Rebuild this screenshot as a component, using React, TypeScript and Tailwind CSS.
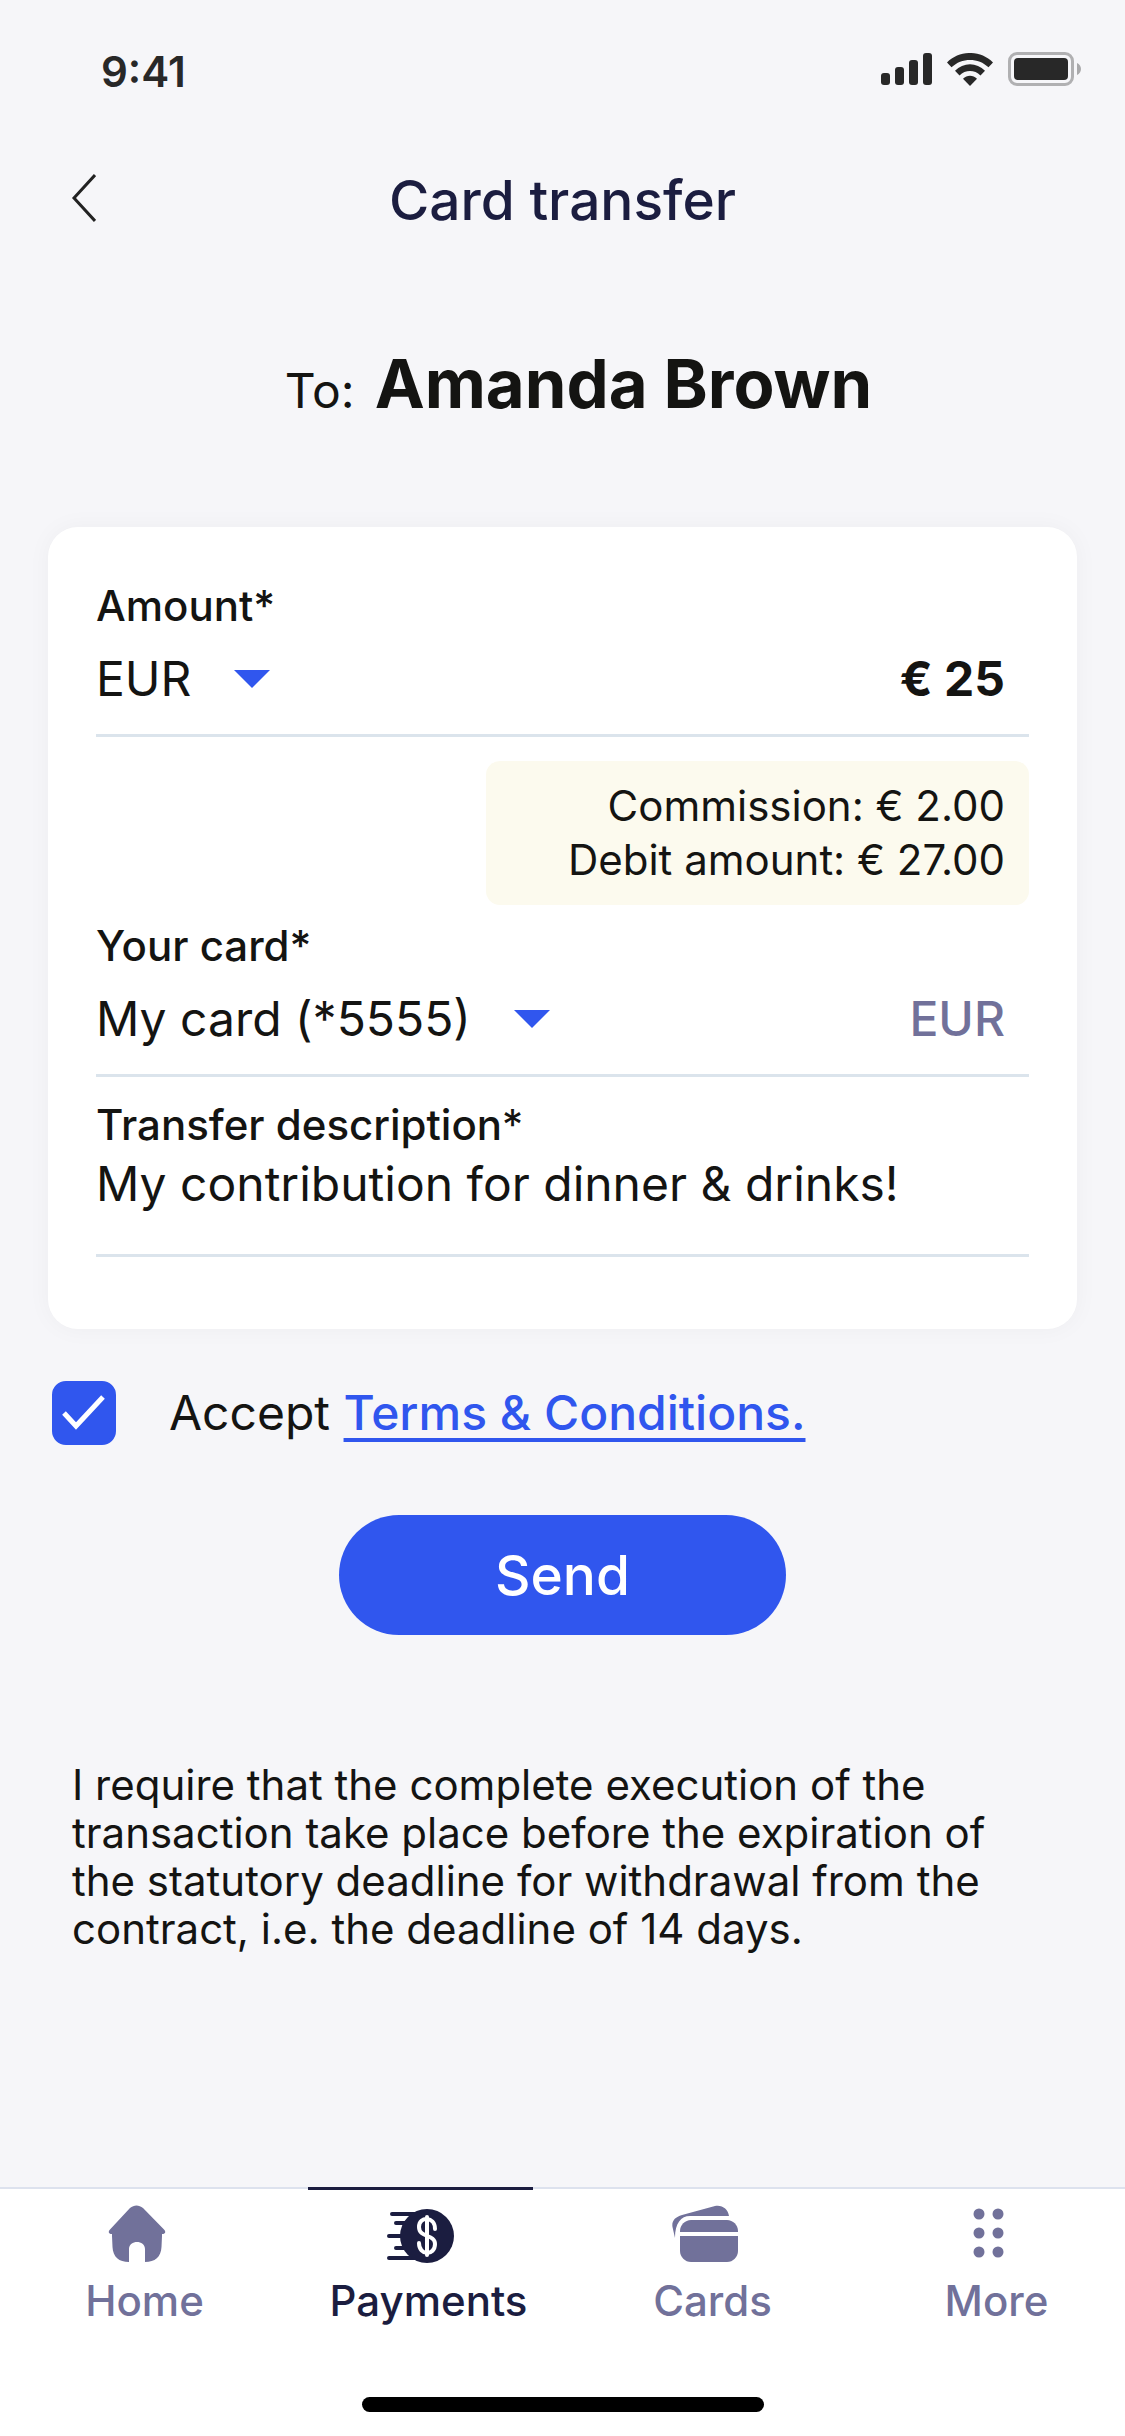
import { useState } from 'react';

function SignalIcon() {
  return (
    <svg width="51" height="33" viewBox="0 0 51 33" fill="#282828">
      <rect x="0" y="20" width="9" height="12" rx="3" />
      <rect x="14" y="14" width="9" height="18" rx="3" />
      <rect x="28" y="7" width="9" height="25" rx="3" />
      <rect x="42" y="0" width="9" height="32" rx="3" />
    </svg>
  );
}

function WifiIcon() {
  return (
    <svg width="46" height="33" viewBox="0 0 46 33" fill="#282828">
      <path d="M0 9.5C12.5-3.2 33.5-3.2 46 9.5L41.5 14.3C31.5 4.5 14.5 4.5 4.5 14.3Z" />
      <path d="M8 17.8C16.2 9 29.8 9 38 17.8L33.5 22.4C27.6 16.5 18.4 16.5 12.5 22.4Z" />
      <path d="M16 25.8C20 21.7 26 21.7 30 25.8L23 33Z" />
    </svg>
  );
}

function BatteryIcon() {
  return (
    <svg width="73" height="34" viewBox="0 0 73 34">
      <rect x="1.5" y="1.5" width="63" height="31" rx="7.5" fill="none" stroke="#b0b0b2" strokeWidth="3" />
      <rect x="6" y="6" width="54" height="22" rx="4" fill="#282828" />
      <path d="M69 11C71.5 12 73 14.5 73 17C73 19.5 71.5 22 69 23Z" fill="#a9a9ab" />
    </svg>
  );
}

function Caret() {
  return (
    <svg width="36" height="18" viewBox="0 0 36 18" className="pointer-events-none">
      <path d="M0 0H36L18 18Z" fill="#3056ee" />
    </svg>
  );
}

function HomeIcon() {
  return (
    <svg width="58" height="58" viewBox="0 0 58 58" fill="currentColor">
      <path d="M22 3C26 -.5 31 -.5 35 3L56 24.500C58.500 27 57 29 54 29V31L53.500 42C53 52 47 57 37 57V44C37 34.500 21 34.500 21 44V57C11 57 5 52 4.500 42L4 31V29C1 29-.5 27 2 24.500Z" />
    </svg>
  );
}

function PaymentsIcon() {
  return (
    <svg width="68" height="58" viewBox="0 0 68 58">
      <g stroke="currentColor" strokeWidth="4" strokeLinecap="round">
        <path d="M5 9H38M9 18H22M2 31H22M9 43H22M2 53H38" />
      </g>
      <circle cx="40" cy="31" r="27" fill="currentColor" />
      <g fill="none" stroke="#fff" strokeWidth="4" strokeLinecap="round">
        <path d="M40 12V50" />
        <path d="M48 24C48 11 32 11 32 22C32 33 48 29 48 39C48 51 32 51 32 38" />
      </g>
    </svg>
  );
}

function CardsIcon() {
  return (
    <svg width="66" height="58" viewBox="0 0 66 58" fill="currentColor">
      <path d="M10 10L43 1C50-.5 56 4 57 11H18C9 11 3 18 3 33L.5 22C-.5 16 3 12 10 10Z" />
      <path d="M8 27V26C8 20 13 15 19 15H55C61 15 66 20 66 26V27Z" />
      <path d="M8 31H66V46C66 52 61 57 55 57H19C13 57 8 52 8 46Z" />
    </svg>
  );
}

function MoreIcon() {
  return (
    <svg width="32" height="58" viewBox="0 0 32 58" fill="currentColor">
      {[9, 28, 47].map((y) => (
        <g key={y}>
          <circle cx="6" cy={y} r="5.500" />
          <circle cx="25" cy={y} r="5.500" />
        </g>
      ))}
    </svg>
  );
}

const tabs = [
  { label: 'Home', Icon: HomeIcon },
  { label: 'Payments', Icon: PaymentsIcon },
  { label: 'Cards', Icon: CardsIcon },
  { label: 'More', Icon: MoreIcon },
];

export default function App() {
  const [currency, setCurrency] = useState('EUR');
  const [card, setCard] = useState('5555');
  const [amount, setAmount] = useState('€ 25');
  const [description, setDescription] = useState('My contribution for dinner & drinks!');
  const [accepted, setAccepted] = useState(true);
  const [activeTab, setActiveTab] = useState('Payments');

  return (
    <div className="flex min-h-screen flex-col bg-[#f6f6f9] font-['Inter','Liberation_Sans',sans-serif] text-[#141412]">
      {/* Status bar */}
      <div className="flex h-[132px] items-start justify-between pt-[46px] pr-[44px] pl-[101px] text-[#282828]">
        <span className="text-[42px] leading-[52px] font-semibold">9:41</span>
        <div className="flex items-center gap-[15px] pt-[6px]">
          <SignalIcon />
          <WifiIcon />
          <BatteryIcon />
        </div>
      </div>

      {/* Header */}
      <header className="grid h-[132px] grid-cols-[1fr_auto_1fr] items-center px-[70px]">
        <button type="button" aria-label="Back" className="justify-self-start">
          <svg width="26" height="50" viewBox="0 0 26 50" fill="none" stroke="#222" strokeWidth="3">
            <path d="M25 2L4 25L25 48" />
          </svg>
        </button>
        <h1 className="pt-1 text-[55px] leading-[64px] font-medium text-[#1b1d40]">Card transfer</h1>
      </header>

      <main className="flex flex-1 flex-col px-12">
        <div className="flex items-baseline justify-center gap-5 pt-[80px] pl-8">
          <span className="text-[48px] leading-[80px]">To:</span>
          <h2 className="text-[67px] leading-[80px] font-bold">Amanda Brown</h2>
        </div>

        {/* Transfer form */}
        <section className="mt-[96px] rounded-[30px] bg-white px-12 pt-[53px] pb-[72px] shadow-[0_0_24px_rgba(0,0,0,0.04)]">
          <label htmlFor="amount" className="block text-[42px] leading-[52px] font-medium">
            Amount*
          </label>
          <div className="flex h-[105px] items-start justify-between border-b-3 border-[#dbe4ec] pt-[15px] pr-6 text-[48px] leading-[64px]">
            <div className="flex items-center gap-[43px]">
              <select
                aria-label="Currency"
                value={currency}
                onChange={(e) => setCurrency(e.target.value)}
                className="field-sizing-content appearance-none bg-transparent"
              >
                <option value="EUR">EUR</option>
                <option value="USD">USD</option>
              </select>
              <Caret />
            </div>
            <input
              id="amount"
              value={amount}
              onChange={(e) => setAmount(e.target.value)}
              className="h-16 w-[300px] bg-transparent text-right font-bold"
            />
          </div>

          <div className="mt-6 ml-auto w-[543px] max-w-full rounded-[14px] bg-[#fcfaee] py-[18px] pr-6 text-right text-[42px] leading-[54px]">
            <p>Commission: € 2.00</p>
            <p>Debit amount: € 27.00</p>
          </div>

          <label htmlFor="card" className="mt-[15px] block text-[42px] leading-[52px] font-medium">
            Your card*
          </label>
          <div className="flex h-[105px] items-start justify-between border-b-3 border-[#dbe4ec] pt-[15px] pr-6 text-[48px] leading-[64px]">
            <div className="flex items-center gap-[43px]">
              <select
                id="card"
                value={card}
                onChange={(e) => setCard(e.target.value)}
                className="field-sizing-content appearance-none bg-transparent"
              >
                <option value="5555">My card (*5555)</option>
              </select>
              <Caret />
            </div>
            <span className="font-medium text-[#71719a]">EUR</span>
          </div>

          <label htmlFor="description" className="mt-[22px] block text-[42px] leading-[52px] font-medium">
            Transfer description<span className="font-normal">*</span>
          </label>
          <input
            id="description"
            value={description}
            onChange={(e) => setDescription(e.target.value)}
            className="block h-[106px] w-full border-b-3 border-[#dbe4ec] bg-transparent pb-[38px] text-[48px] leading-[64px]"
          />
        </section>

        <div className="mt-[52px] flex items-center gap-[53px] pl-1 text-[48px] leading-[64px]">
          <div className="relative size-16">
            <input
              id="terms"
              type="checkbox"
              checked={accepted}
              onChange={(e) => setAccepted(e.target.checked)}
              className="block size-16 appearance-none rounded-[14px] border-3 border-[#3056ee] checked:bg-[#3056ee]"
            />
            {accepted && (
              <svg viewBox="0 0 64 64" fill="none" stroke="#fff" strokeWidth="5" className="pointer-events-none absolute inset-0">
                <path d="M12 32L24 45L51 16" />
              </svg>
            )}
          </div>
          <p>
            <label htmlFor="terms">Accept </label>
            <a href="#terms" className="font-medium text-[#3056ee] underline decoration-4 underline-offset-8">
              Terms &amp; Conditions.
            </a>
          </p>
        </div>

        <button
          type="button"
          className="mt-[70px] h-[120px] w-[447px] self-center rounded-full bg-[#3056ee] text-[55px] leading-[64px] font-medium text-white"
        >
          Send
        </button>

        <p className="mt-[126px] px-6 text-[42px] leading-[48px]">
          I require that the complete execution of the transaction take place before the expiration of the statutory
          deadline for withdrawal from the contract, i.e. the deadline of 14 days.
        </p>
      </main>

      {/* Bottom navigation */}
      <footer className="bg-white">
        <nav className="grid grid-cols-4 gap-[59px] border-t-2 border-[#dde2ee] px-6">
          {tabs.map(({ label, Icon }) => {
            const active = label === activeTab;
            return (
              <button
                key={label}
                type="button"
                onClick={() => setActiveTab(label)}
                className={
                  active
                    ? '-mt-[2px] flex flex-col items-center border-t-3 border-[#1b1d40] pt-[15px] text-[#1b1d40]'
                    : '-mt-[2px] flex flex-col items-center border-t-3 border-transparent pt-[15px] text-[#71719a]'
                }
              >
                <Icon />
                <span className="mt-3 pl-4 text-[42px] leading-[52px] font-medium">{label}</span>
              </button>
            );
          })}
        </nav>
        <div className="mx-auto mt-[70px] mb-6 h-[15px] w-[402px] rounded-full bg-black" />
      </footer>
    </div>
  );
}
